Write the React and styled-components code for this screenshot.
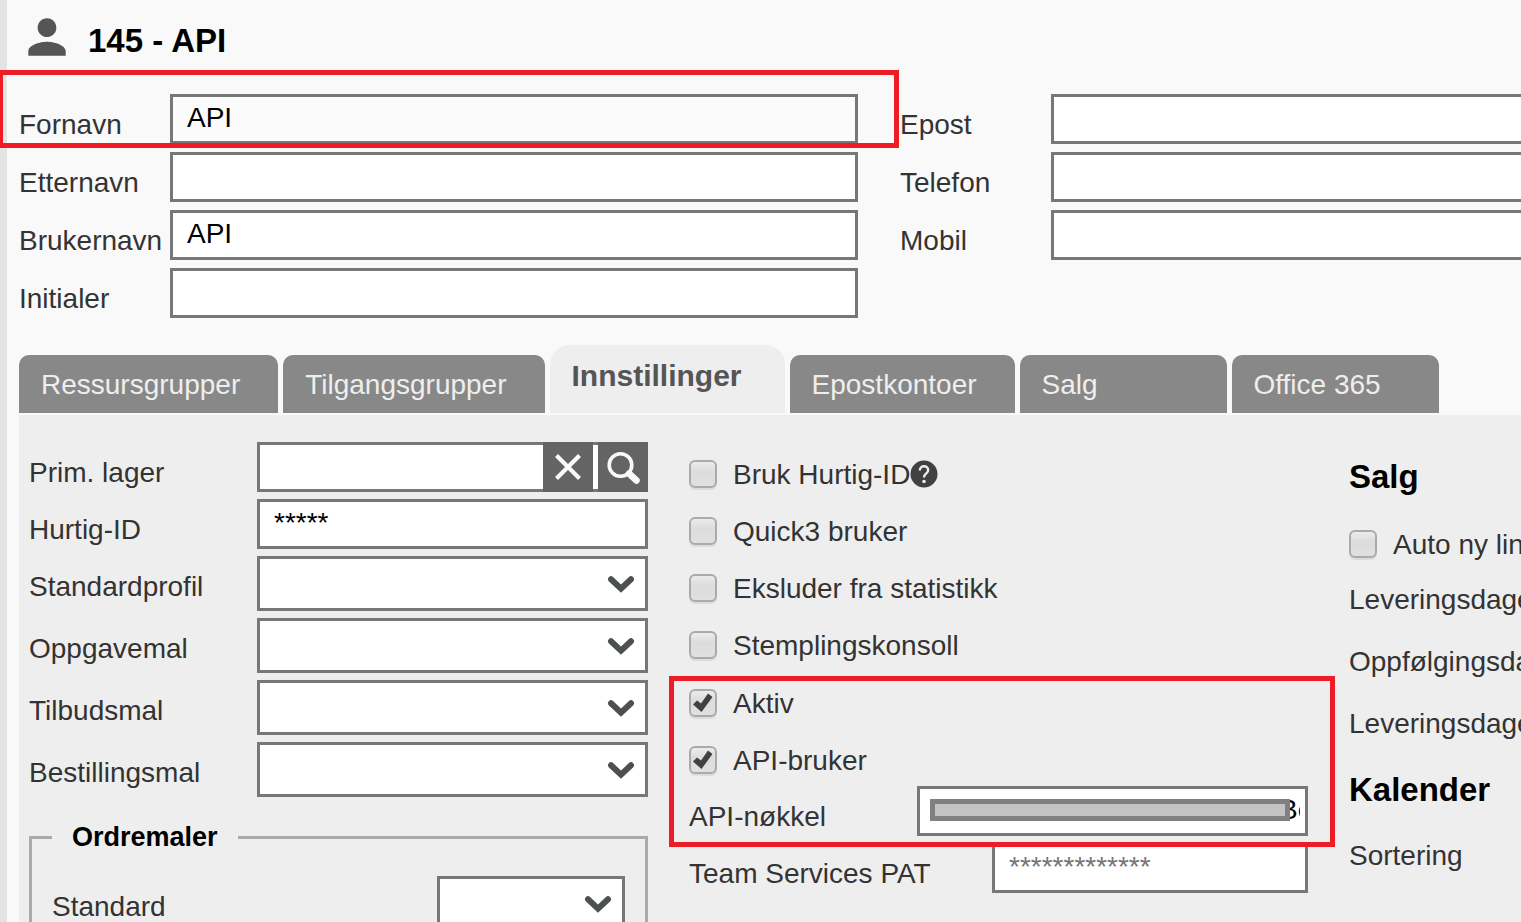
import React, { useId, useState } from "react";
import styled, { createGlobalStyle } from "styled-components";

const tabs = [
  "Ressursgrupper",
  "Tilgangsgrupper",
  "Innstillinger",
  "Epostkontoer",
  "Salg",
  "Office 365",
];

const TextField = ({ label, labelWidth, children, ...rest }) => {
  const id = useId();
  return (
    <Field>
      <Label htmlFor={id} $width={labelWidth}>
        {label}
      </Label>
      <Input id={id} type='text' {...rest} />
      {children}
    </Field>
  );
};

const SelectField = ({ label, labelWidth }) => {
  const id = useId();
  return (
    <Field>
      <Label htmlFor={id} $width={labelWidth} $drop={7}>
        {label}
      </Label>
      <SelectBox>
        <Select id={id} />
        <svg width='28' height='20' viewBox='0 0 28 20' aria-hidden='true'>
          <path
            d='M4 4.200 L14 13.600 L24 4.200'
            fill='none'
            stroke='#4d5050'
            strokeWidth='6'
            strokeLinecap='round'
          />
        </svg>
      </SelectBox>
    </Field>
  );
};

const LookupField = ({ label }) => {
  const id = useId();
  return (
    <Field>
      <Label htmlFor={id}>{label}</Label>
      <Lookup>
        <input id={id} type='text' />
        <IconButton type='button' aria-label='Tøm'>
          <svg width='50' height='50' viewBox='0 0 50 50'>
            <path
              d='M13.500 13.500 L36.500 36.500 M36.500 13.500 L13.500 36.500'
              stroke='#fafafa'
              strokeWidth='4.200'
              fill='none'
            />
          </svg>
        </IconButton>
        <IconButton type='button' aria-label='Søk'>
          <svg width='50' height='50' viewBox='0 0 50 50'>
            <circle
              cx='22.500'
              cy='23'
              r='11.300'
              stroke='#fafafa'
              strokeWidth='3.600'
              fill='none'
            />
            <path
              d='M31 31.500 L38.500 38.500'
              stroke='#fafafa'
              strokeWidth='6.500'
              strokeLinecap='round'
            />
          </svg>
        </IconButton>
      </Lookup>
    </Field>
  );
};

const CheckField = ({ label, checked, children }) => {
  const id = useId();
  return (
    <CheckRow>
      <CheckBox>
        <input id={id} type='checkbox' defaultChecked={checked} />
        <svg width='28' height='28' viewBox='0 0 28 28' aria-hidden='true'>
          <path
            d='M4 15.500 L8 11.500 L12 14.500 L19 4.500 L23.500 8 L12.500 23 Z'
            fill='#414141'
          />
        </svg>
      </CheckBox>
      <label htmlFor={id}>{label}</label>
      {children}
    </CheckRow>
  );
};

const KeyField = () => {
  const id = useId();
  return (
    <Field>
      <Label htmlFor={id}>API-nøkkel</Label>
      <KeyBox>
        <KeyInput id={id} type='text' defaultValue='Be' />
        <Mask />
      </KeyBox>
    </Field>
  );
};

const App = () => {
  const [active, setActive] = useState("Innstillinger");

  return (
    <Page>
      <GlobalStyle />
      <Header>
        <svg width='56' height='56' viewBox='0 0 24 24' aria-hidden='true'>
          <path
            d='M12 12c2.210 0 4-1.790 4-4s-1.790-4-4-4-4 1.790-4 4 1.790 4 4 4zm0 2c-2.670 0-8 1.340-8 4v2h16v-2c0-2.660-5.330-4-8-4z'
            fill='#555'
          />
        </svg>
        <h1>145 - API</h1>
      </Header>

      <Person>
        <Column $gap={8}>
          <TextField label='Fornavn' labelWidth={151} defaultValue='API' $muted>
            <Highlight $inset='-24px -41px -4px -21px' />
          </TextField>
          <TextField label='Etternavn' labelWidth={151} />
          <TextField label='Brukernavn' labelWidth={151} defaultValue='API' />
          <TextField label='Initialer' labelWidth={151} />
        </Column>
        <Column $gap={8}>
          <TextField label='Epost' labelWidth={151} />
          <TextField label='Telefon' labelWidth={151} />
          <TextField label='Mobil' labelWidth={151} />
        </Column>
      </Person>

      <TabBar role='tablist'>
        {tabs.map((tab) => (
          <Tab
            key={tab}
            type='button'
            role='tab'
            aria-selected={tab === active}
            $active={tab === active}
            onClick={() => setActive(tab)}
          >
            {tab}
          </Tab>
        ))}
      </TabBar>

      <Panel>
        <Column>
          <LookupField label='Prim. lager' />
          <TextField label='Hurtig-ID' defaultValue='*****' />
          <SelectField label='Standardprofil' />
          <SelectField label='Oppgavemal' />
          <SelectField label='Tilbudsmal' />
          <SelectField label='Bestillingsmal' />
          <Group>
            <legend>Ordremaler</legend>
            <SelectField label='Standard' labelWidth={385} />
          </Group>
        </Column>

        <Column>
          <CheckField label='Bruk Hurtig-ID'>
            <HelpButton type='button' aria-label='Hjelp'>
              <svg width='28' height='28' viewBox='0 0 28 28'>
                <circle cx='14' cy='14' r='13.500' fill='#414141' />
                <path
                  d='M9.800 10.500 C9.800 4.800 18.200 4.800 18.200 10.300 C18.200 13.500 14 13.500 14 17.500'
                  fill='none'
                  stroke='#eee'
                  strokeWidth='2.400'
                />
                <circle cx='14' cy='21.500' r='1.800' fill='#eee' />
              </svg>
            </HelpButton>
          </CheckField>
          <CheckField label='Quick3 bruker' />
          <CheckField label='Eksluder fra statistikk' />
          <CheckField label='Stemplingskonsoll' />
          <ApiSection>
            <CheckField label='Aktiv' checked />
            <CheckField label='API-bruker' checked />
            <KeyField />
            <Highlight $inset='5px -27px -11px -20px' />
          </ApiSection>
          <TextField
            label='Team Services PAT'
            labelWidth={303}
            placeholder='*************'
          />
        </Column>

        <Column>
          <Heading>Salg</Heading>
          <CheckField label='Auto ny linje' />
          <SelectField label='Leveringsdager' />
          <SelectField label='Oppfølgingsdager' />
          <SelectField label='Leveringsdager' />
          <Heading>Kalender</Heading>
          <SelectField label='Sortering' />
        </Column>
      </Panel>
    </Page>
  );
};

const GlobalStyle = createGlobalStyle`
  * {
    box-sizing: border-box;
  }

  body {
    margin: 0;
    background: #f9f9f9;
  }

  body,
  button,
  input,
  select {
    font-family: "Liberation Sans", Arial, sans-serif;
    font-size: 28px;
    line-height: 32px;
    color: #333;
  }
`;

const Page = styled.main`
  height: 100vh;
  overflow: hidden;
  padding-left: 19px;
  box-shadow: inset 7px 0 #e4e4e4;
`;

const Header = styled.header`
  display: flex;
  align-items: center;
  gap: 13px;
  height: 94px;
  padding-bottom: 12px;

  svg {
    flex: none;
    margin-bottom: 8px;
  }

  h1 {
    margin: 0;
    font-size: 33px;
    line-height: 38px;
    color: #000;
  }
`;

/* the columns are wider than half the page, the last one runs out of view */
const Person = styled.section`
  display: grid;
  grid-template-columns: repeat(2, calc(50% + 88px));
  gap: 42px;
  height: 223px;
`;

const Column = styled.div`
  display: flex;
  flex-direction: column;
  gap: ${({ $gap }) => $gap || 7}px;
  min-width: 0;
`;

const Field = styled.div`
  display: flex;
  align-items: center;
  position: relative;
`;

const Label = styled.label`
  flex: 0 0 ${({ $width }) => $width || 228}px;
  padding-top: ${({ $drop }) => $drop || 12}px;
  white-space: nowrap;
`;

const Input = styled.input`
  flex: 1;
  min-width: 0;
  height: 50px;
  padding: 0 14px 2px;
  border: 3px solid #777;
  border-radius: 0;
  background: ${({ $muted }) => ($muted ? "#fbfbfb" : "#fff")};
  color: #000;
  outline: none;

  &::placeholder {
    color: #757575;
  }
`;

const SelectBox = styled.div`
  flex: 1;
  position: relative;

  svg {
    position: absolute;
    right: 13px;
    top: 19px;
    pointer-events: none;
  }
`;

const Select = styled.select`
  display: block;
  appearance: none;
  width: 100%;
  height: 55px;
  border: 3px solid #777;
  border-radius: 0;
  background: #fff;
`;

const Lookup = styled.div`
  flex: 1;
  min-width: 0;
  display: flex;
  gap: 5px;
  height: 50px;
  background: #fff;
  box-shadow: inset 0 0 0 3px #777;

  input {
    flex: 1;
    min-width: 0;
    margin-right: -5px;
    padding: 0 14px;
    border: 0;
    background: transparent;
    outline: none;
  }
`;

const IconButton = styled.button`
  flex: none;
  width: 50px;
  height: 50px;
  padding: 0;
  border: 0;
  background: #646464;

  svg {
    display: block;
  }
`;

const Highlight = styled.div`
  position: absolute;
  inset: ${({ $inset }) => $inset};
  z-index: 2;
  border: 5px solid #ee1c25;
  pointer-events: none;
`;

const TabBar = styled.div`
  display: flex;
  align-items: flex-end;
  gap: 5px;
  height: 96px;
`;

const Tab = styled.button`
  min-width: 207px;
  height: ${({ $active }) => ($active ? 68 : 58)}px;
  padding: ${({ $active }) => ($active ? "0 43px 6px 22px" : "2px 38px 0 22px")};
  border: 0;
  border-radius: ${({ $active }) =>
    $active ? "20px 20px 0 0" : "10px 10px 0 0"};
  background: ${({ $active }) => ($active ? "#eee" : "#888")};
  color: ${({ $active }) => ($active ? "#555" : "#eee")};
  font-size: ${({ $active }) => ($active ? 30 : 28)}px;
  font-weight: ${({ $active }) => ($active ? "bold" : "normal")};
  text-align: left;
  white-space: nowrap;
`;

const Panel = styled.section`
  display: grid;
  grid-template-columns: repeat(3, calc(50% - 127px));
  gap: 41px;
  margin-top: 2px;
  padding: 27px 0 27px 10px;
  background: #eee;
`;

const CheckRow = styled.div`
  display: flex;
  align-items: center;
  height: 50px;
  padding-top: 14px;
  white-space: nowrap;

  label {
    padding-top: 2px;
  }
`;

const CheckBox = styled.span`
  position: relative;
  flex: none;
  width: 28px;
  height: 28px;
  margin-right: 16px;

  input {
    display: block;
    appearance: none;
    width: 28px;
    height: 28px;
    margin: 0;
    border: 2px solid #aaa;
    border-radius: 6px;
    background: linear-gradient(#ececec, #dcdcdc 40%, #e0e0e0);
    box-shadow: 0 2px 0 #dcdcdc;
  }

  svg {
    display: none;
    position: absolute;
    top: 0;
    left: 0;
    pointer-events: none;
  }

  input:checked + svg {
    display: block;
  }
`;

const HelpButton = styled.button`
  width: 28px;
  height: 28px;
  padding: 0;
  border: 0;
  background: none;

  svg {
    display: block;
  }
`;

const ApiSection = styled.div`
  position: relative;
  display: flex;
  flex-direction: column;
  gap: 7px;
  margin-top: 1px;
`;

const KeyBox = styled.div`
  flex: 1;
  position: relative;
  margin-top: 1px;
`;

const KeyInput = styled(Input)`
  display: block;
  width: 100%;
  padding: 0 5px 2px calc(100% - 32px);
`;

const Mask = styled.div`
  position: absolute;
  inset: 13px 18px 15px 13px;
  border: 5px solid #808080;
  background: #c3c3c3;
`;

const Group = styled.fieldset`
  min-width: 0;
  margin: 17px 0 0;
  padding: 23px 20px;
  border: 3px solid #a9aaab;

  legend {
    padding: 0 20px;
    font-size: 27px;
    font-weight: bold;
    color: #000;
  }
`;

const Heading = styled.h2`
  margin: 16px 0 9px;
  font-size: 33px;
  line-height: 38px;
  color: #000;
`;

export default App;
